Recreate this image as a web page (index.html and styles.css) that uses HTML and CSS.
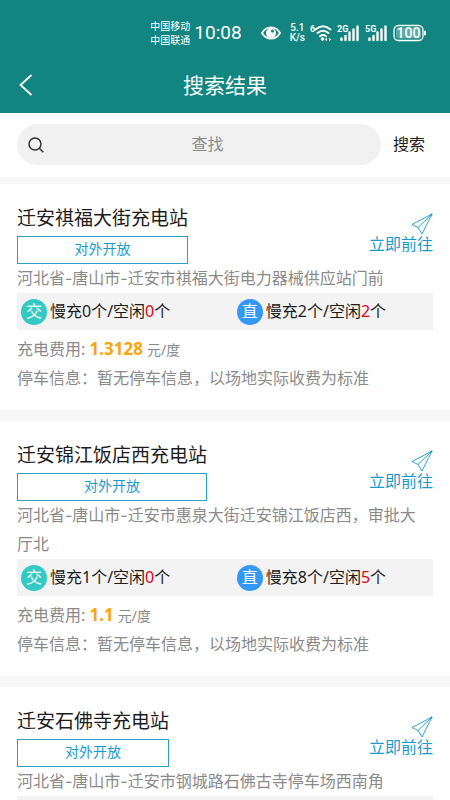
FILE: index.html
```html
<!DOCTYPE html>
<html lang="zh-CN">
<head>
<meta charset="utf-8">
<meta name="viewport" content="width=device-width, initial-scale=1">
<title>搜索结果</title>
<link rel="stylesheet" href="styles.css">
</head>
<body>
<svg class="defs" aria-hidden="true">
  <symbol id="plane" viewBox="0 0 22 22">
    <path d="M21 1 1 11.5 7 14.5 11 21Z M7 14.5 21 1" fill="none" stroke="currentColor" stroke-width=".9" stroke-linejoin="round"/>
    <circle cx="20.5" cy="1.5" r="1" fill="currentColor"/>
  </symbol>
</svg>
<div class="app">
  <header class="header">
    <div class="status">
      <div class="carriers"><span>中国移动</span><span>中国联通</span></div>
      <time class="clock">10:08</time>
      <svg class="eye" width="20" height="16" viewBox="0 0 20 16"><path d="M1 8C5 0.500 15 0.500 19 8C15 15.500 5 15.500 1 8Z" fill="none" stroke="#fff" stroke-width="1.800"/><circle cx="10" cy="8" r="5" fill="#fff"/><circle cx="11.500" cy="6" r="1.600" fill="#128580"/></svg>
      <div class="speed"><span>5.1</span><span>K/s</span></div>
      <svg class="wifi" width="22" height="18" viewBox="0 0 22 18"><text x="0" y="8" class="net">6</text><g fill="none" stroke="#fff" stroke-width="2" stroke-linecap="round"><path d="M5.500 5.500Q13 -1 20.500 5.500"/><path d="M7.500 9Q13 4.500 18.500 9"/><path d="M10 12.200Q13 9.800 16 12.200"/></g><circle cx="12.500" cy="15" r="1.800" fill="#fff"/><path d="M15 15.500 17 13.500V17.500ZM21 15.500 19 13.500V17.500Z" fill="#fff"/></svg>
      <svg class="signal" width="23" height="18" viewBox="0 0 23 18"><text x="0" y="8" class="net">2G</text><path d="M4.500 16V14.500M8.500 16V12M12.500 16V8.500M16.500 16V5.500M20.500 16V2.500" stroke="#fff" stroke-width="2.400" stroke-linecap="round"/></svg>
      <svg class="signal" width="23" height="18" viewBox="0 0 23 18"><text x="0" y="8" class="net">5G</text><path d="M4.500 16V14.500M8.500 16V12M12.500 16V8.500M16.500 16V5.500M20.500 16V2.500" stroke="#fff" stroke-width="2.400" stroke-linecap="round"/></svg>
      <svg class="battery" width="33" height="18" viewBox="0 0 33 18"><rect x="1" y="1.500" width="29" height="15" rx="4.500" fill="none" stroke="#fff" stroke-width="1.300"/><rect x="3" y="3.500" width="25" height="11" rx="2.500" fill="#fff" opacity=".3"/><path d="M32 7.500V10.500" stroke="#fff" stroke-width="1.800" stroke-linecap="round"/><text x="15.500" y="14" text-anchor="middle" class="charge">100</text></svg>
    </div>
    <div class="navbar">
      <button class="back" type="button" aria-label="返回"><svg width="14" height="22" viewBox="0 0 14 22"><path d="M12.500 1 1.500 11 12.500 21" fill="none" stroke="#fff" stroke-width="1.800"/></svg></button>
      <h1>搜索结果</h1>
    </div>
  </header>

  <form class="search">
    <label class="field">
      <svg width="16" height="16" viewBox="0 0 16 16"><g fill="none" stroke="#333" stroke-width="1.500"><circle cx="7" cy="7" r="6"/><path d="M11.500 11.500 15.300 15.300"/></g></svg>
      <input type="text" placeholder="查找" aria-label="查找">
    </label>
    <button class="submit" type="button">搜索</button>
  </form>

  <main class="list">
    <article class="card">
      <div class="head">
        <div class="name"><h2>迁安祺福大街充电站</h2><span class="tag">对外开放</span></div>
        <a class="go" href="#"><svg width="22" height="22"><use href="#plane"/></svg><span>立即前往</span></a>
      </div>
      <p class="address">河北省-唐山市-迁安市祺福大街电力器械供应站门前</p>
      <div class="piles">
        <div class="pile"><span class="badge ac">交</span><span>慢充0个/空闲<em>0</em>个</span></div>
        <div class="pile"><span class="badge dc">直</span><span>慢充2个/空闲<em>2</em>个</span></div>
      </div>
      <p class="info">充电费用: <strong>1.3128</strong> <small>元/度</small></p>
      <p class="info">停车信息：暂无停车信息，以场地实际收费为标准</p>
    </article>

    <article class="card">
      <div class="head">
        <div class="name"><h2>迁安锦江饭店西充电站</h2><span class="tag">对外开放</span></div>
        <a class="go" href="#"><svg width="22" height="22"><use href="#plane"/></svg><span>立即前往</span></a>
      </div>
      <p class="address">河北省-唐山市-迁安市惠泉大街迁安锦江饭店西，审批大厅北</p>
      <div class="piles">
        <div class="pile"><span class="badge ac">交</span><span>慢充1个/空闲<em>0</em>个</span></div>
        <div class="pile"><span class="badge dc">直</span><span>慢充8个/空闲<em>5</em>个</span></div>
      </div>
      <p class="info">充电费用: <strong>1.1</strong> <small>元/度</small></p>
      <p class="info">停车信息：暂无停车信息，以场地实际收费为标准</p>
    </article>

    <article class="card">
      <div class="head">
        <div class="name"><h2>迁安石佛寺充电站</h2><span class="tag">对外开放</span></div>
        <a class="go" href="#"><svg width="22" height="22"><use href="#plane"/></svg><span>立即前往</span></a>
      </div>
      <p class="address">河北省-唐山市-迁安市钢城路石佛古寺停车场西南角</p>
      <div class="piles"></div>
    </article>
  </main>
</div>
</body>
</html>
```

FILE: styles.css
```css
* { box-sizing: border-box; }

body {
  margin: 0;
  background: #fff;
  color: #1c1c1c;
  font: 16px/29px "Noto Sans", "Noto Sans CJK SC", sans-serif;
}

h1, h2, p { margin: 0; font-weight: 400; }
button, input { padding: 0; border: 0; background: none; color: inherit; font: inherit; }
svg { display: block; flex: none; }

.defs { position: absolute; width: 0; height: 0; }

.app {
  display: flex;
  flex-direction: column;
  height: 100vh;
  overflow: hidden;
}

/* Header */
.header { flex: none; background: #128580; color: #fff; }

.status {
  display: flex;
  align-items: center;
  justify-content: flex-end;
  height: 57px;
  padding: 9px 24px 0 0;
}

.carriers {
  display: grid;
  font-size: 10px;
  line-height: 14px;
}

.clock {
  margin: 0 19px 0 4px;
  font: 19px/24px Roboto, sans-serif;
}

.speed {
  display: grid;
  margin: 0 5px 0 9px;
  font: 500 10px/10px Roboto, sans-serif;
  text-align: center;
}

.net { fill: #fff; font: 700 9px Roboto, sans-serif; }
.charge { fill: #fff; font: 500 14px Roboto, sans-serif; }
.signal { margin-left: 5px; }
.battery { margin-left: 5px; }

.navbar {
  display: grid;
  grid-template-columns: 40px 1fr 40px;
  align-items: center;
  height: 56px;
}

.back { padding-left: 19px; }
.navbar h1 { font-size: 21px; line-height: 28px; text-align: center; }

/* Search */
.search {
  display: flex;
  flex: none;
  padding: 11px 25px 12px 17px;
  border-bottom: 7px solid #f7f7f7;
}

.field {
  display: flex;
  flex: 1;
  align-items: center;
  height: 41px;
  padding: 0 10px 0 11px;
  border-radius: 21px;
  background: #f1f1f1;
}

.field input { flex: 1; min-width: 0; text-align: center; outline: 0; }
.field input::placeholder { color: #8c8c8c; opacity: 1; }
.submit { margin-left: 12px; }

/* Station cards */
.list { flex: 1; min-height: 0; overflow: hidden; }

.card {
  padding: 20px 17px 17px;
  border-bottom: 11px solid #f7f7f7;
}

.head { display: flex; justify-content: space-between; }
.name { display: grid; gap: 4px; }
.name h2 { font-size: 19px; line-height: 28px; }

.tag {
  height: 28px;
  border: 1px solid #2a9fca;
  color: #1a9aca;
  font-size: 14px;
  line-height: 24px;
  text-align: center;
}

.go {
  display: flex;
  flex-direction: column;
  align-items: flex-end;
  padding-top: 9px;
  color: #1a9aca;
  line-height: 18px;
  text-decoration: none;
}

.address {
  padding-right: 8px;
  color: #8a8a8a;
  font-family: Inter, "Noto Sans CJK SC", sans-serif;
}

.piles {
  display: grid;
  grid-template-columns: 11fr 10fr;
  align-items: center;
  height: 37px;
  margin-bottom: 5px;
  padding-left: 4px;
  background: #f3f3f4;
}

.pile { display: flex; align-items: center; gap: 3px; }
.pile em { color: #e60012; font-style: normal; }

.badge {
  width: 26px;
  height: 26px;
  border-radius: 50%;
  color: #fff;
  line-height: 25px;
  text-align: center;
}

.ac { background: #33c9c5; }
.dc { background: #3498fb; }

.info { color: #8a8a8a; }
.info strong { color: #f8a60c; font-size: 17px; font-weight: 700; line-height: 1; }
.info small { font-size: 14px; line-height: 1; }
```
